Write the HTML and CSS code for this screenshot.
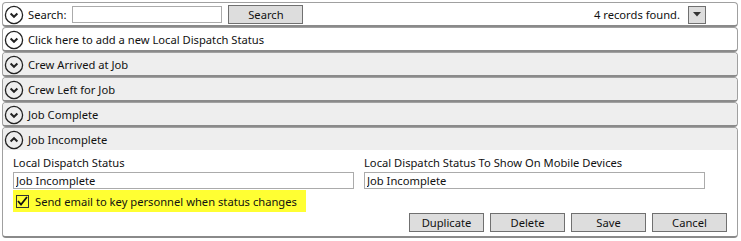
FILE: index.html
```html
<!DOCTYPE html>
<html>
<head>
    <meta charset="utf-8">
    <link rel="stylesheet" href="styles.css">
</head>
<body>
    <div class="list">
        <div class="panel">
            <div class="panel-head search-bar">
                <span class="toggle"><svg width="20" height="20" viewBox="0 0 20 20"><circle cx="10" cy="10" r="8.6" fill="none" stroke="#222" stroke-width="1.3"/><path d="M6.6 8.6 L10 11.8 L13.4 8.6" fill="none" stroke="#222" stroke-width="2"/></svg></span>
                <span class="head-label">Search:</span>
                <input class="search-input" type="text">
                <button class="btn search-btn">Search</button>
                <span class="spacer"></span>
                <span class="count">4 records found.</span>
                <button class="drop-btn"><svg width="8" height="5" viewBox="0 0 8 5"><path d="M0 0 L8 0 L4 4.5 Z" fill="#333"/></svg></button>
            </div>
        </div>

        <div class="panel">
            <div class="panel-head">
                <span class="toggle"><svg width="20" height="20" viewBox="0 0 20 20"><circle cx="10" cy="10" r="8.6" fill="none" stroke="#222" stroke-width="1.3"/><path d="M6.6 8.6 L10 11.8 L13.4 8.6" fill="none" stroke="#222" stroke-width="2"/></svg></span>
                <span class="head-label">Click here to add a new Local Dispatch Status</span>
            </div>
        </div>

        <div class="panel record">
            <div class="panel-head">
                <span class="toggle"><svg width="20" height="20" viewBox="0 0 20 20"><circle cx="10" cy="10" r="8.6" fill="none" stroke="#222" stroke-width="1.3"/><path d="M6.6 8.6 L10 11.8 L13.4 8.6" fill="none" stroke="#222" stroke-width="2"/></svg></span>
                <span class="head-label">Crew Arrived at Job</span>
            </div>
        </div>

        <div class="panel record">
            <div class="panel-head">
                <span class="toggle"><svg width="20" height="20" viewBox="0 0 20 20"><circle cx="10" cy="10" r="8.6" fill="none" stroke="#222" stroke-width="1.3"/><path d="M6.6 8.6 L10 11.8 L13.4 8.6" fill="none" stroke="#222" stroke-width="2"/></svg></span>
                <span class="head-label">Crew Left for Job</span>
            </div>
        </div>

        <div class="panel record">
            <div class="panel-head">
                <span class="toggle"><svg width="20" height="20" viewBox="0 0 20 20"><circle cx="10" cy="10" r="8.6" fill="none" stroke="#222" stroke-width="1.3"/><path d="M6.6 8.6 L10 11.8 L13.4 8.6" fill="none" stroke="#222" stroke-width="2"/></svg></span>
                <span class="head-label">Job Complete</span>
            </div>
        </div>

        <div class="panel record open">
            <div class="panel-head">
                <span class="toggle"><svg width="20" height="20" viewBox="0 0 20 20"><circle cx="10" cy="10" r="8.6" fill="none" stroke="#222" stroke-width="1.3"/><path d="M6.6 11.4 L10 8.2 L13.4 11.4" fill="none" stroke="#222" stroke-width="2"/></svg></span>
                <span class="head-label">Job Incomplete</span>
            </div>
            <div class="panel-body">
                <div class="fields">
                    <label class="field">
                        <span class="field-label">Local Dispatch Status</span>
                        <input class="field-input" type="text" value="Job Incomplete">
                    </label>
                    <label class="field">
                        <span class="field-label">Local Dispatch Status To Show On Mobile Devices</span>
                        <input class="field-input" type="text" value="Job Incomplete">
                    </label>
                </div>
                <label class="check">
                    <span class="check-box"><svg width="11" height="10" viewBox="0 0 11 10"><path d="M1 5 L4 8.5 L10 1" fill="none" stroke="#111" stroke-width="1.8"/></svg></span>
                    <span>Send email to key personnel when status changes</span>
                </label>
                <div class="actions">
                    <button class="btn">Duplicate</button>
                    <button class="btn">Delete</button>
                    <button class="btn">Save</button>
                    <button class="btn">Cancel</button>
                </div>
            </div>
        </div>
    </div>
</body>
</html>
```

FILE: styles.css
```css
body {
    margin: 0;
    background: #fff;
    font-family: "Noto Sans", "Open Sans", sans-serif;
    font-size: 11.2px;
    color: #111;
}

.list {
    display: flex;
    flex-direction: column;
    padding: 2px 3px 0 2px;
}

.panel {
    border: 1px solid #a0a0a0;
    border-bottom: 2px solid #8a8a8a;
    border-radius: 4px;
    background: #fff;
    overflow: hidden;
}

.panel-head {
    display: flex;
    align-items: center;
    height: 21px;
    padding: 1px 0 0 1px;
}

.record .panel-head {
    background: #eeeeee;
}

.toggle {
    display: flex;
    width: 20px;
    height: 20px;
    margin-right: 4px;
}

.head-label {
    line-height: 21px;
    white-space: nowrap;
}

.search-input {
    width: 144px;
    height: 15px;
    margin-left: 6px;
    padding: 0 2px;
    border: 1px solid #ababab;
    font: inherit;
}

.btn {
    height: 19px;
    width: 75px;
    padding: 0;
    border: 1px solid #707070;
    background: #dddddd;
    font-family: inherit;
    font-size: 11.2px;
    color: #111;
}

.search-btn {
    margin-left: 6px;
}

.spacer {
    flex: 1;
}

.count {
    margin-right: 8px;
}

.drop-btn {
    display: flex;
    align-items: center;
    justify-content: center;
    width: 18px;
    height: 18px;
    margin-right: 31px;
    padding: 0;
    border: 1px solid #707070;
    background: #dddddd;
}

.panel-body {
    padding: 4px 10px 4px 10px;
}

.fields {
    display: grid;
    grid-template-columns: 341px 341px;
    column-gap: 10px;
}

.field {
    display: flex;
    flex-direction: column;
}

.field-label {
    line-height: 18px;
}

.field-input {
    height: 15px;
    padding: 0 2px;
    border: 1px solid #ababab;
    font: inherit;
    color: #111;
}

.check {
    display: inline-flex;
    align-items: center;
    gap: 6px;
    height: 22px;
    margin-top: 1px;
    padding: 0 9px 0 3px;
    background: #ffff33;
}

.check-box {
    display: flex;
    align-items: center;
    justify-content: center;
    width: 11px;
    height: 11px;
    border: 1px solid #333;
    background: #ffff33;
}

.actions {
    display: flex;
    justify-content: flex-end;
    gap: 6px;
    margin-top: 1px;
}
```
